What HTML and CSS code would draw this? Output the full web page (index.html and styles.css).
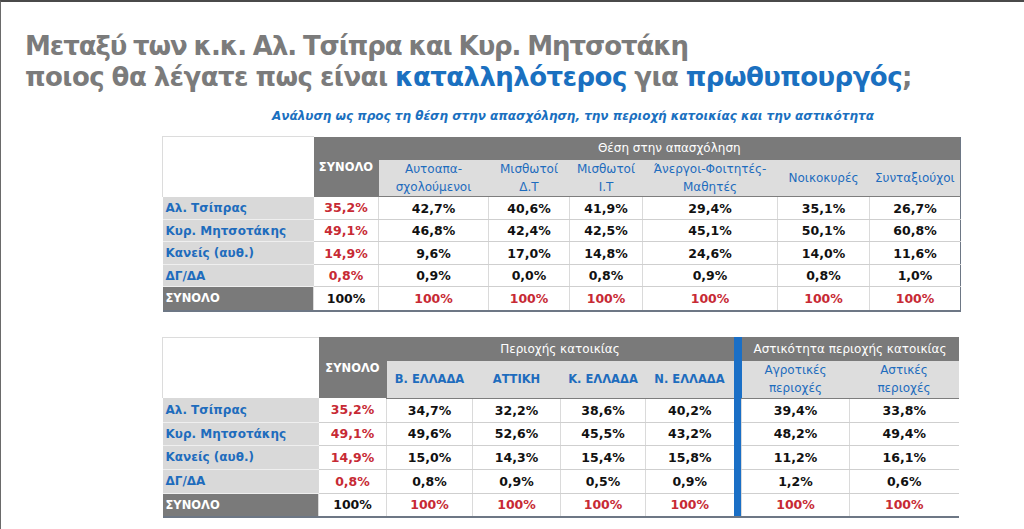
FILE: index.html
```html
<!DOCTYPE html>
<html lang="el">
<head>
<meta charset="utf-8">
<link rel="stylesheet" href="styles.css">
</head>
<body>
<div class="frame">
  <h1 class="title"><span class="l1">Μεταξύ των κ.κ. Αλ. Τσίπρα και Κυρ. Μητσοτάκη</span><br>ποιος θα λέγατε πως είναι <span class="hl">καταλληλότερος</span> για <span class="hl">πρωθυπουργός</span><span class="semi">;</span></h1>
  <p class="subtitle">Ανάλυση ως προς τη θέση στην απασχόληση, την περιοχή κατοικίας και την αστικότητα</p>

  <table class="grid t1">
    <colgroup>
      <col class="c-lab1"><col class="c-tot1"><col class="c-w110"><col class="c-w81"><col class="c-w73"><col class="c-w135"><col class="c-w92"><col class="c-w91">
    </colgroup>
    <tr class="h1">
      <td class="blank" rowspan="2"></td>
      <th class="dark tot" rowspan="2">ΣΥΝΟΛΟ</th>
      <th class="dark group" colspan="6">Θέση στην απασχόληση</th>
    </tr>
    <tr class="h2">
      <th class="sub">Αυτοαπα-<br>σχολούμενοι</th>
      <th class="sub">Μισθωτοί<br>Δ.Τ</th>
      <th class="sub">Μισθωτοί<br>Ι.Τ</th>
      <th class="sub">Άνεργοι-Φοιτητές-<br>Μαθητές</th>
      <th class="sub">Νοικοκυρές</th>
      <th class="sub">Συνταξιούχοι</th>
    </tr>
    <tr class="r r1"><th class="lab">Αλ. Τσίπρας</th><td class="red">35,2%</td><td>42,7%</td><td>40,6%</td><td>41,9%</td><td>29,4%</td><td>35,1%</td><td>26,7%</td></tr>
    <tr class="r r2"><th class="lab">Κυρ. Μητσοτάκης</th><td class="red">49,1%</td><td>46,8%</td><td>42,4%</td><td>42,5%</td><td>45,1%</td><td>50,1%</td><td>60,8%</td></tr>
    <tr class="r r3"><th class="lab">Κανείς (αυθ.)</th><td class="red">14,9%</td><td>9,6%</td><td>17,0%</td><td>14,8%</td><td>24,6%</td><td>14,0%</td><td>11,6%</td></tr>
    <tr class="r r4"><th class="lab">ΔΓ/ΔΑ</th><td class="red">0,8%</td><td>0,9%</td><td>0,0%</td><td>0,8%</td><td>0,9%</td><td>0,8%</td><td>1,0%</td></tr>
    <tr class="r tr"><th class="lab total">ΣΥΝΟΛΟ</th><td>100%</td><td class="red">100%</td><td class="red">100%</td><td class="red">100%</td><td class="red">100%</td><td class="red">100%</td><td class="red">100%</td></tr>
  </table>

  <table class="grid t2">
    <colgroup>
      <col class="c-lab2"><col class="c-tot2"><col class="c-w86"><col class="c-w88"><col class="c-w85"><col class="c-w88"><col class="c-bar"><col class="c-w108"><col class="c-w109">
    </colgroup>
    <tr class="h1">
      <td class="blank" rowspan="2"></td>
      <th class="dark tot" rowspan="2">ΣΥΝΟΛΟ</th>
      <th class="dark group" colspan="4">Περιοχής κατοικίας</th>
      <td class="bar" rowspan="7"></td>
      <th class="dark group" colspan="2">Αστικότητα περιοχής κατοικίας</th>
    </tr>
    <tr class="h2">
      <th class="sub caps">Β. ΕΛΛΑΔΑ</th>
      <th class="sub caps">ΑΤΤΙΚΗ</th>
      <th class="sub caps">Κ. ΕΛΛΑΔΑ</th>
      <th class="sub caps">Ν. ΕΛΛΑΔΑ</th>
      <th class="sub">Αγροτικές<br>περιοχές</th>
      <th class="sub">Αστικές<br>περιοχές</th>
    </tr>
    <tr class="r r1"><th class="lab">Αλ. Τσίπρας</th><td class="red">35,2%</td><td>34,7%</td><td>32,2%</td><td>38,6%</td><td>40,2%</td><td>39,4%</td><td>33,8%</td></tr>
    <tr class="r r2"><th class="lab">Κυρ. Μητσοτάκης</th><td class="red">49,1%</td><td>49,6%</td><td>52,6%</td><td>45,5%</td><td>43,2%</td><td>48,2%</td><td>49,4%</td></tr>
    <tr class="r r3"><th class="lab">Κανείς (αυθ.)</th><td class="red">14,9%</td><td>15,0%</td><td>14,3%</td><td>15,4%</td><td>15,8%</td><td>11,2%</td><td>16,1%</td></tr>
    <tr class="r r4"><th class="lab">ΔΓ/ΔΑ</th><td class="red">0,8%</td><td>0,8%</td><td>0,9%</td><td>0,5%</td><td>0,9%</td><td>1,2%</td><td>0,6%</td></tr>
    <tr class="r tr"><th class="lab total">ΣΥΝΟΛΟ</th><td>100%</td><td class="red">100%</td><td class="red">100%</td><td class="red">100%</td><td class="red">100%</td><td class="red">100%</td><td class="red">100%</td></tr>
  </table>
</div>
</body>
</html>
```

FILE: styles.css
```css
html, body {
  margin: 0;
  padding: 0;
  background: #ffffff;
}
.frame {
  width: 1023px;
  height: 527px;
  border-top: 2px solid #4a4a4a;
  border-left: 1px solid #6a6a6a;
  overflow: hidden;
  font-family: "DejaVu Sans", "Liberation Sans", sans-serif;
}
.title {
  margin: 0;
  padding: 29px 0 0 24px;
  font-size: 26px;
  line-height: 31px;
  font-weight: bold;
  color: #7b7b7b;
  letter-spacing: -0.55px;
  word-spacing: -1px;
}
.title .l1 { letter-spacing: -1.1px; word-spacing: -1px; }
.title .hl { color: #1a70c0; }
.title .semi { color: #7b7b7b; }
.subtitle {
  margin: 16px 0 0 271px;
  font-size: 12px;
  line-height: 14px;
  font-weight: bold;
  font-style: italic;
  color: #1a70c0;
}
.grid {
  border-collapse: collapse;
  table-layout: fixed;
  margin-left: 161px;
  font-size: 12.5px;
  font-weight: bold;
}
.t1 { width: 798px; margin-top: 13px; border-right: 1px solid #6d7785; border-bottom: 2px solid #6d7785; }
.t2 { width: 796px; margin-top: 25px; border-bottom: 2px solid #6d7785; }
.c-lab1 { width: 151px; } .c-tot1 { width: 65px; }
.c-w110 { width: 110px; } .c-w81 { width: 81px; } .c-w73 { width: 73px; }
.c-w135 { width: 135px; } .c-w92 { width: 92px; } .c-w91 { width: 91px; }
.c-lab2 { width: 156px; } .c-tot2 { width: 68px; }
.c-w86 { width: 86px; } .c-w88 { width: 88px; } .c-w85 { width: 85px; }
.c-bar { width: 8px; } .c-w108 { width: 108px; } .c-w109 { width: 109px; }

.grid th, .grid td {
  padding: 0;
  text-align: center;
  vertical-align: middle;
  font-weight: bold;
}
.blank {
  background: #ffffff;
  border-top: 1px solid #dcdcdc;
  border-left: 1px solid #dcdcdc;
}
.dark {
  background: #7a7a7a;
  color: #ffffff;
}
.grid .tot { font-size: 11.5px; }
.grid .group { font-weight: normal; font-size: 12px; }
.t1 .h1 { height: 23px; }
.t2 .h1 { height: 24px; }
.h2 { height: 37px; }
.grid .sub {
  background: #dddddd;
  color: #1e6cbd;
  font-weight: normal;
  font-size: 12px;
  line-height: 18px;
  border-bottom: 1px solid #7d7d7d;
}
.grid .sub.caps { font-weight: bold; font-size: 11.5px; }
.bar { background: #1a6fc6; }
.grid .lab {
  text-align: left;
  padding-left: 3px;
  background: #d9d9d9;
  color: #1e6cbd;
  font-size: 12px;
  border-bottom: 1px solid #efefef;
}
.grid .lab.total {
  background: #7a7a7a;
  color: #ffffff;
  font-size: 11.5px;
}
.r td {
  color: #111111;
  border-left: 1px solid #dadada;
  border-bottom: 1px solid #cfcfcf;
}
.r td.red { color: #c72a34; }
.t1 .r1, .t1 .r3 { height: 23px; }
.t1 .r2, .t1 .r4 { height: 22px; }
.t1 .tr { height: 24px; }
.t2 .r { height: 24px; }
.t2 .r2 { height: 23px; }
```
